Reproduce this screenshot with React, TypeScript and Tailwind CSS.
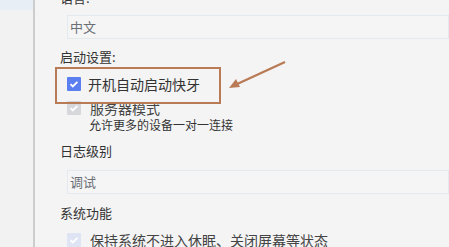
import React from 'react';

const font = { fontFamily: '"Noto Sans CJK SC", "Noto Sans", sans-serif' };

function Check({ tone }: { tone: 'on' | 'off' | 'faded' }) {
  const bg =
    tone === 'on' ? 'bg-[#5b7ef0]' : tone === 'off' ? 'bg-[#d5d7da]' : 'bg-[#dfe4f5]';
  return (
    <span className={`flex h-[14px] w-[14px] shrink-0 items-center justify-center rounded-[1px] ${bg}`}>
      <svg viewBox="0 0 14 14" className="h-[14px] w-[14px]">
        <path d="M3.5 7.2l2.3 2.3 4.6-4.7" fill="none" stroke="#fff" strokeWidth="1.8" />
      </svg>
    </span>
  );
}

function Field({ value }: { value: string }) {
  return (
    <div className="ml-[7px] flex h-[24px] items-center border border-[#e4e9ee] bg-[#f5f5f5] pl-[2px] text-[13px] text-[#6b6f75]">
      {value}
    </div>
  );
}

export default function App() {
  return (
    <div className="relative flex h-[247px] w-[449px] overflow-hidden bg-[#f4f4f4]" style={font}>
      {/* sidebar */}
      <div className="w-[35px] shrink-0 border-r-2 border-[#cdcdcd] bg-[#f2f2f2]">
        <div className="h-[10px] bg-[#e8eef5]" />
      </div>

      {/* settings */}
      <div className="flex-1 pl-[25px] text-[#333]">
        <div className="-mt-[12px] flex h-[20px] items-center text-[13px]">语言:</div>
        <div className="mt-[7px]">
          <Field value="中文" />
        </div>

        <div className="mt-[8px] flex h-[20px] items-center text-[13px]">启动设置:</div>
        <div className="ml-[7px] mt-[7px] flex h-[20px] items-center gap-[7px] text-[14px]">
          <Check tone="on" />
          <span>开机自动启动快牙</span>
        </div>
        <div className="ml-[7px] mt-[5px] flex h-[18px] items-center gap-[9px] text-[14px] text-[#444]">
          <Check tone="off" />
          <span>服务器模式</span>
        </div>
        <div className="ml-[29px] flex h-[16px] items-center text-[12px]">允许更多的设备一对一连接</div>

        <div className="mt-[8px] flex h-[20px] items-center text-[13px]">日志级别</div>
        <div className="mt-[9px]">
          <Field value="调试" />
        </div>

        <div className="mt-[9px] flex h-[20px] items-center text-[13px]">系统功能</div>
        <div className="ml-[7px] mt-[7px] flex h-[20px] items-center gap-[9px] text-[14px] text-[#444]">
          <Check tone="faded" />
          <span>保持系统不进入休眠、关闭屏幕等状态</span>
        </div>
      </div>

      {/* annotation */}
      <div className="absolute left-[55px] top-[67px] h-[37px] w-[166px] border-2 border-[#b97a56]" />
      <svg className="absolute left-[225px] top-[58px]" width="66" height="34" viewBox="0 0 66 34">
        <path d="M60 4L10 27" stroke="#b97a56" strokeWidth="2.4" fill="none" />
        <path d="M4 30L11 21L15 29Z" fill="#b97a56" />
      </svg>
    </div>
  );
}
